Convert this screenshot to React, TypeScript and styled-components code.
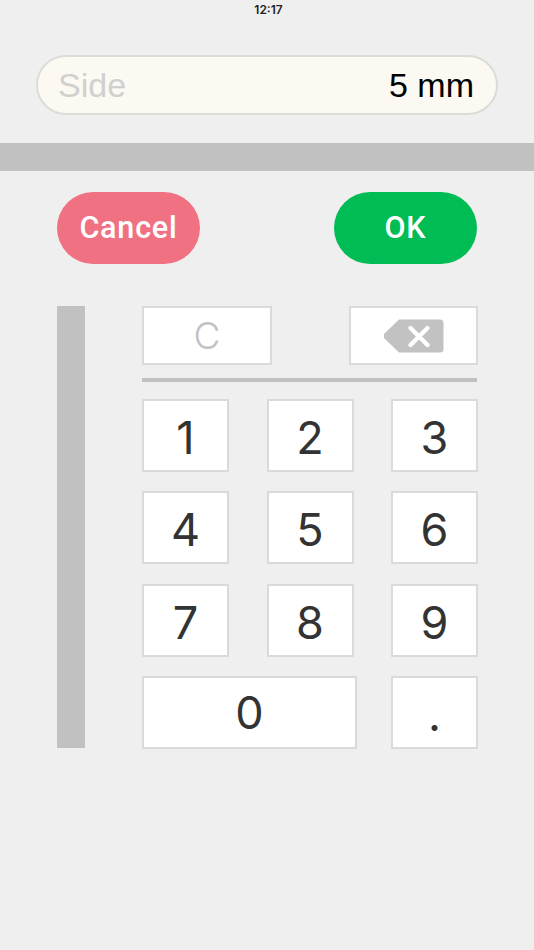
import styled, { createGlobalStyle } from 'styled-components';

const GlobalStyle = createGlobalStyle`
  html, body {
    margin: 0;
    padding: 0;
    background: #efefef;
  }
`;

const App = () => {
  const rows = [
    ['1', '2', '3'],
    ['4', '5', '6'],
    ['7', '8', '9'],
  ];

  return (
    <S.Page>
      <GlobalStyle />
      <S.StatusBar>12:17</S.StatusBar>
      <S.Field>
        <S.FieldLabel>Side</S.FieldLabel>
        <S.FieldValue>5 mm</S.FieldValue>
      </S.Field>
      <S.TitleBar />
      <S.Actions>
        <S.ActionButton $color="#f07182">Cancel</S.ActionButton>
        <S.ActionButton $color="#00bc55">OK</S.ActionButton>
      </S.Actions>
      <S.KeypadArea>
        <S.SideBar />
        <S.Keypad>
          <S.EditRow>
            <S.EditKey $width={130}>C</S.EditKey>
            <S.EditKey $width={129} aria-label="Delete">
              <svg width="60" height="34" viewBox="0 0 60 34">
                <path
                  d="M15 0.5H56a3.5 3.5 0 0 1 3.5 3.5V30a3.5 3.5 0 0 1-3.5 3.5H15L1 20a4 4 0 0 1 0-6z"
                  fill="#c2c2c2"
                />
                <path d="M26.5 9L43.5 26M43.5 9L26.5 26" stroke="#fff" strokeWidth="4.4" strokeLinecap="round" />
              </svg>
            </S.EditKey>
          </S.EditRow>
          <S.Divider />
          <S.Grid>
            {rows.flat().map((digit) => (
              <S.Key key={digit}>{digit}</S.Key>
            ))}
            <S.ZeroKey>0</S.ZeroKey>
            <S.Key>.</S.Key>
          </S.Grid>
        </S.Keypad>
      </S.KeypadArea>
    </S.Page>
  );
};

export default App;

const S = {
  Page: styled.div`
    width: 534px;
    height: 950px;
    overflow: hidden;
    background: #efefef;
    font-family: 'Liberation Sans', Arial, sans-serif;
  `,

  StatusBar: styled.div`
    height: 55px;
    padding: 3px 0 0 3px;
    box-sizing: border-box;
    font-size: 12px;
    line-height: 14px;
    text-align: center;
    color: #222;
    font-family: Inter, 'Liberation Sans', sans-serif;
    font-weight: 600;
  `,

  Field: styled.div`
    display: flex;
    align-items: center;
    justify-content: space-between;
    box-sizing: border-box;
    width: 462px;
    height: 60px;
    margin-left: 36px;
    padding: 0 22px 0 20px;
    background: #fbf9f1;
    border: 2px solid #dbdbd7;
    border-radius: 30px;
    font-size: 34px;
  `,

  FieldLabel: styled.span`
    color: #d0d0ce;
  `,

  FieldValue: styled.span`
    color: #000;
  `,

  TitleBar: styled.div`
    height: 28px;
    margin-top: 28px;
    background: #c1c1c1;
  `,

  Actions: styled.div`
    display: flex;
    justify-content: space-between;
    width: 420px;
    margin: 21px 0 0 57px;
  `,

  ActionButton: styled.div<{ $color: string }>`
    display: flex;
    align-items: center;
    justify-content: center;
    width: 143px;
    height: 72px;
    padding-bottom: 2px;
    box-sizing: border-box;
    border-radius: 36px;
    background: ${(p) => p.$color};
    color: #fff;
    font-family: Roboto, sans-serif;
    font-size: 30.5px;
    font-weight: 500;
    letter-spacing: 0.8px;
  `,

  KeypadArea: styled.div`
    display: flex;
    gap: 57px;
    margin: 42px 0 0 57px;
  `,

  SideBar: styled.div`
    width: 28px;
    height: 442px;
    background: #c1c1c1;
  `,

  Keypad: styled.div`
    width: 336px;
  `,

  EditRow: styled.div`
    display: flex;
    justify-content: space-between;
  `,

  EditKey: styled.div<{ $width: number }>`
    display: flex;
    align-items: center;
    justify-content: center;
    box-sizing: border-box;
    width: ${(p) => p.$width}px;
    height: 59px;
    background: #fff;
    border: 2px solid #dadada;
    color: #c2c2c2;
    font-family: Inter, sans-serif;
    font-size: 37px;
    font-weight: 300;
  `,

  Divider: styled.div`
    width: 335px;
    height: 4px;
    margin: 13px 0 17px;
    background: #c1c1c1;
  `,

  Grid: styled.div`
    display: grid;
    grid-template-columns: repeat(3, 87px);
    grid-auto-rows: 73px;
    column-gap: 37.5px;
    row-gap: 19.4px;
  `,

  Key: styled.div`
    display: flex;
    align-items: center;
    justify-content: center;
    box-sizing: border-box;
    padding-top: 4px;
    background: #fff;
    border: 2px solid #dadada;
    color: #333;
    font-family: Inter, sans-serif;
    font-size: 45px;
  `,

  ZeroKey: styled.div`
    display: flex;
    align-items: center;
    justify-content: center;
    box-sizing: border-box;
    width: 215px;
    grid-column: span 2;
    background: #fff;
    border: 2px solid #dadada;
    color: #333;
    font-family: Inter, sans-serif;
    font-size: 45px;
  `,
};
